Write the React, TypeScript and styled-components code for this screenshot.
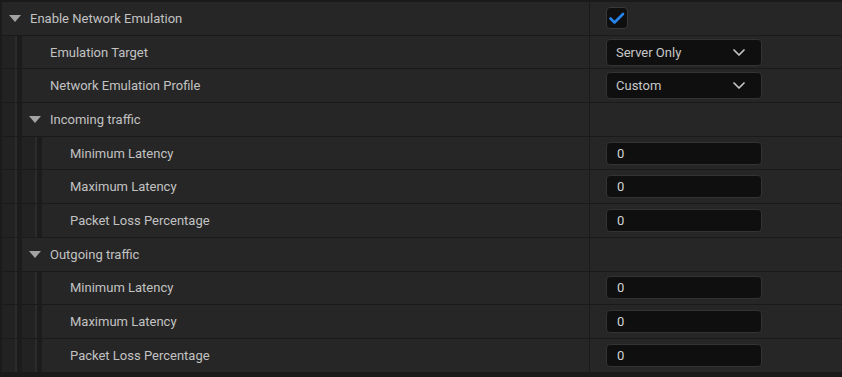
import React from "react";
import styled, { createGlobalStyle } from "styled-components";

const GlobalStyle = createGlobalStyle`
  html, body {
    margin: 0;
    padding: 0;
    background: #1a1a1a;
  }
  body {
    font-family: Roboto, "Noto Sans", sans-serif;
    font-size: 13px;
    color: #c2c2c2;
  }
`;

const Panel = styled.div`
  width: 842px;
  padding-top: 2px;
  background: #1a1a1a;
`;

const Row = styled.div`
  display: flex;
  height: 32.7px;
  border-bottom: 1px solid #1a1a1a;
  background: #262626;
`;

const NameSide = styled.div`
  display: flex;
  width: 589px;
  flex: 0 0 589px;
  height: 100%;
`;

const Gutter = styled.div`
  width: 2px;
  flex: 0 0 2px;
  background: #1b1b1b;
`;

const Indent = styled.div`
  width: 20px;
  flex: 0 0 20px;
  background: linear-gradient(
    to right,
    #222222 0,
    #222222 13px,
    #2b2b2b 13px,
    #2b2b2b 15px,
    #1c1c1c 15px,
    #1c1c1c 20px
  );
`;

const NameCell = styled.div<{ $expander?: boolean }>`
  display: flex;
  align-items: center;
  flex: 1;
  padding-left: ${(p) => (p.$expander ? "7px" : "28px")};
  white-space: nowrap;
`;

const Arrow = styled.span`
  width: 0;
  height: 0;
  border-left: 6px solid transparent;
  border-right: 6px solid transparent;
  border-top: 7px solid #a3a3a3;
  margin-right: 9px;
  margin-top: 1px;
`;

const Divider = styled.div`
  width: 1px;
  flex: 0 0 1px;
  background: #1a1a1a;
`;

const ValueCell = styled.div`
  display: flex;
  align-items: center;
  flex: 1;
  padding-left: 16px;
`;

const CheckBox = styled.div`
  box-sizing: border-box;
  width: 22px;
  height: 22px;
  border: 1px solid #383838;
  border-radius: 4px;
  background: #0f0f0f;
  display: flex;
  align-items: center;
  justify-content: center;
`;

const Combo = styled.div`
  box-sizing: border-box;
  width: 156px;
  height: 27px;
  border: 1px solid #333333;
  border-radius: 4px;
  background: #0f0f0f;
  display: flex;
  align-items: center;
  justify-content: space-between;
  padding: 0 16px 0 9px;
  color: #c8c8c8;
`;

const NumberBox = styled.div`
  box-sizing: border-box;
  width: 156px;
  height: 23px;
  border: 1px solid #333333;
  border-radius: 4px;
  background: #0f0f0f;
  display: flex;
  align-items: center;
  padding-left: 10px;
  color: #d4d4d4;
`;

const Check = () => (
  <svg width="20" height="20" viewBox="0 0 20 20">
    <polyline
      points="3.5,10.5 7.5,14.5 16,6"
      fill="none"
      stroke="#2784ea"
      strokeWidth="2.6"
      strokeLinecap="round"
      strokeLinejoin="round"
    />
  </svg>
);

const Chevron = () => (
  <svg width="12" height="7" viewBox="0 0 12 7">
    <polyline
      points="1,1 6,6 11,1"
      fill="none"
      stroke="#c4c4c4"
      strokeWidth="1.7"
      strokeLinecap="round"
      strokeLinejoin="round"
    />
  </svg>
);

interface IProp {
  label: string;
  level: number;
  expander?: boolean;
  value?: React.ReactNode;
}

function PropRow({ label, level, expander, value }: IProp) {
  return (
    <Row>
      <NameSide>
        <Gutter />
        {Array.from({ length: level }).map((_, i) => (
          <Indent key={i} />
        ))}
        <NameCell $expander={expander}>
          {expander && <Arrow />}
          {label}
        </NameCell>
      </NameSide>
      <Divider />
      <ValueCell>{value}</ValueCell>
    </Row>
  );
}

const trafficRows = (title: string) => [
  { label: title, level: 1, expander: true },
  { label: "Minimum Latency", level: 2, value: <NumberBox>0</NumberBox> },
  { label: "Maximum Latency", level: 2, value: <NumberBox>0</NumberBox> },
  { label: "Packet Loss Percentage", level: 2, value: <NumberBox>0</NumberBox> },
];

export default function App() {
  const rows: IProp[] = [
    {
      label: "Enable Network Emulation",
      level: 0,
      expander: true,
      value: (
        <CheckBox>
          <Check />
        </CheckBox>
      ),
    },
    {
      label: "Emulation Target",
      level: 1,
      value: (
        <Combo>
          Server Only
          <Chevron />
        </Combo>
      ),
    },
    {
      label: "Network Emulation Profile",
      level: 1,
      value: (
        <Combo>
          Custom
          <Chevron />
        </Combo>
      ),
    },
    ...trafficRows("Incoming traffic"),
    ...trafficRows("Outgoing traffic"),
  ];

  return (
    <>
      <GlobalStyle />
      <Panel>
        {rows.map((r, i) => (
          <PropRow key={i} {...r} />
        ))}
      </Panel>
    </>
  );
}
